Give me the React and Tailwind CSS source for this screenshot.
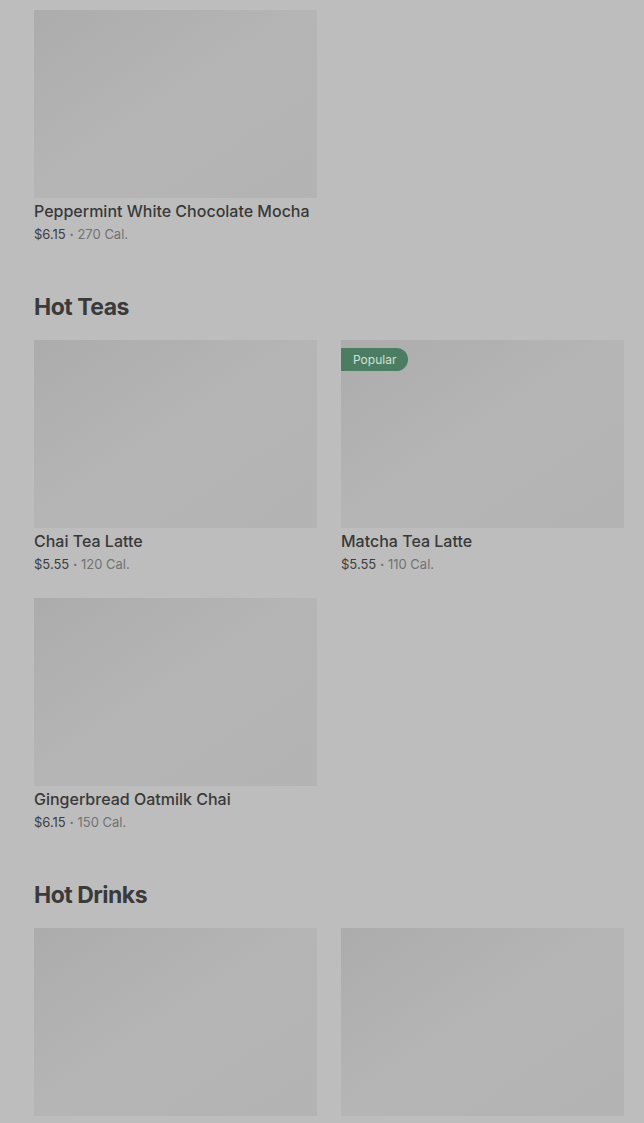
// App.jsx - menu grid seen behind a dim overlay
const sections = [
  {
    title: null,
    items: [{ name: 'Peppermint White Chocolate Mocha', price: '$6.15', cal: '270 Cal.' }],
  },
  {
    title: 'Hot Teas',
    items: [
      { name: 'Chai Tea Latte', price: '$5.55', cal: '120 Cal.' },
      { name: 'Matcha Tea Latte', price: '$5.55', cal: '110 Cal.', popular: true },
      { name: 'Gingerbread Oatmilk Chai', price: '$6.15', cal: '150 Cal.' },
    ],
  },
  {
    title: 'Hot Drinks',
    items: [
      { name: 'Peppermint Hot Chocolate', price: '$4.95', cal: '440 Cal.' },
      { name: 'Hot Chocolate', price: '$4.45', cal: '370 Cal.' },
    ],
  },
];

function ItemCard({ item }) {
  return (
    <div className="flex flex-col">
      <div className="relative h-[188px] bg-gradient-to-br from-[#acacac] via-[#b5b5b5] to-[#b3b3b3]">
        {item.popular && (
          <span className="absolute left-0 top-2 h-[23px] pl-3 pr-3 flex items-center rounded-r-full bg-[#4b7d62] text-[#d3e0d7] text-[12px]">
            Popular
          </span>
        )}
      </div>
      <p className="mt-[3px] text-[16px] leading-5 font-medium text-[#393939] truncate">{item.name}</p>
      <p className="mt-[3px] h-5 text-[13px] leading-5 text-[#3d3d3d]">
        {item.price}
        <span className="text-[#727272]"> <span className="font-bold">·</span> {item.cal}</span>
      </p>
    </div>
  );
}

export default function App() {
  return (
    <div
      className="h-[1123px] overflow-hidden bg-[#bdbdbd] pl-[34px] pr-5 pt-[10px]"
      style={{ fontFamily: 'Inter, "Noto Sans", sans-serif' }}
    >
      {sections.map((s, i) => (
        <section key={i} className={s.title ? 'mt-[47px]' : ''}>
          {s.title && (
            <h2 className="text-[23px] leading-8 font-bold tracking-[-0.5px] text-[#3a3a3a] mb-[17px]">{s.title}</h2>
          )}
          <div className="grid grid-cols-2 gap-x-6 gap-y-6">
            {s.items.map((it) => (
              <ItemCard key={it.name} item={it} />
            ))}
          </div>
        </section>
      ))}
    </div>
  );
}
